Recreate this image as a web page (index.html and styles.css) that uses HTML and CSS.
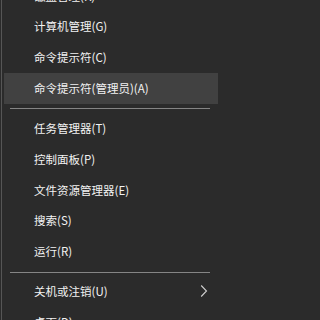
FILE: index.html
```html
<!DOCTYPE html>
<html lang="zh-CN">
<head>
<meta charset="utf-8">
<link rel="stylesheet" href="styles.css">
</head>
<body>
<div class="menu">
  <div class="item">磁盘管理(K)</div>
  <div class="item">计算机管理(G)</div>
  <div class="item">命令提示符(C)</div>
  <div class="item hover">命令提示符(管理员)(A)</div>
  <div class="sep"><span class="line"></span></div>
  <div class="item">任务管理器(T)</div>
  <div class="item">控制面板(P)</div>
  <div class="item">文件资源管理器(E)</div>
  <div class="item">搜索(S)</div>
  <div class="item">运行(R)</div>
  <div class="sep"><span class="line"></span></div>
  <div class="item">关机或注销(U)<svg class="chev" width="8" height="14" viewBox="0 0 8 14"><polyline points="1.2,1.5 6.5,7 1.2,12.5" fill="none" stroke="#cfcfcf" stroke-width="1.1"/></svg></div>
  <div class="item">桌面(D)</div>
</div>
</body>
</html>
```
FILE: styles.css
```css
html, body {
  margin: 0;
  padding: 0;
  background: #2b2b2b;
  height: 100%;
  overflow: hidden;
}
.menu {
  box-sizing: border-box;
  width: 217px;
  margin-left: 1px;
  margin-top: -19px;
  padding-left: 2px;
  border-left: 1px solid #565656;
  min-height: 400px;
  display: flex;
  flex-direction: column;
  font-family: "Noto Sans CJK SC", "Noto Sans", sans-serif;
  font-size: 11.5px;
  color: #f2f2f2;
}
.item {
  height: 30.75px;
  flex: none;
  display: flex;
  align-items: center;
  padding-left: 30px;
  padding-right: 10px;
  line-height: 1;
  white-space: nowrap;
}
.item.hover {
  background: #414141;
}
.sep {
  height: 9.5px;
  flex: none;
  display: flex;
  align-items: center;
}
.line {
  flex: 1;
  height: 1px;
  margin: 0 8px 0 6px;
  background: #858585;
}
.chev {
  margin-left: auto;
  margin-top: -2px;
}
```
